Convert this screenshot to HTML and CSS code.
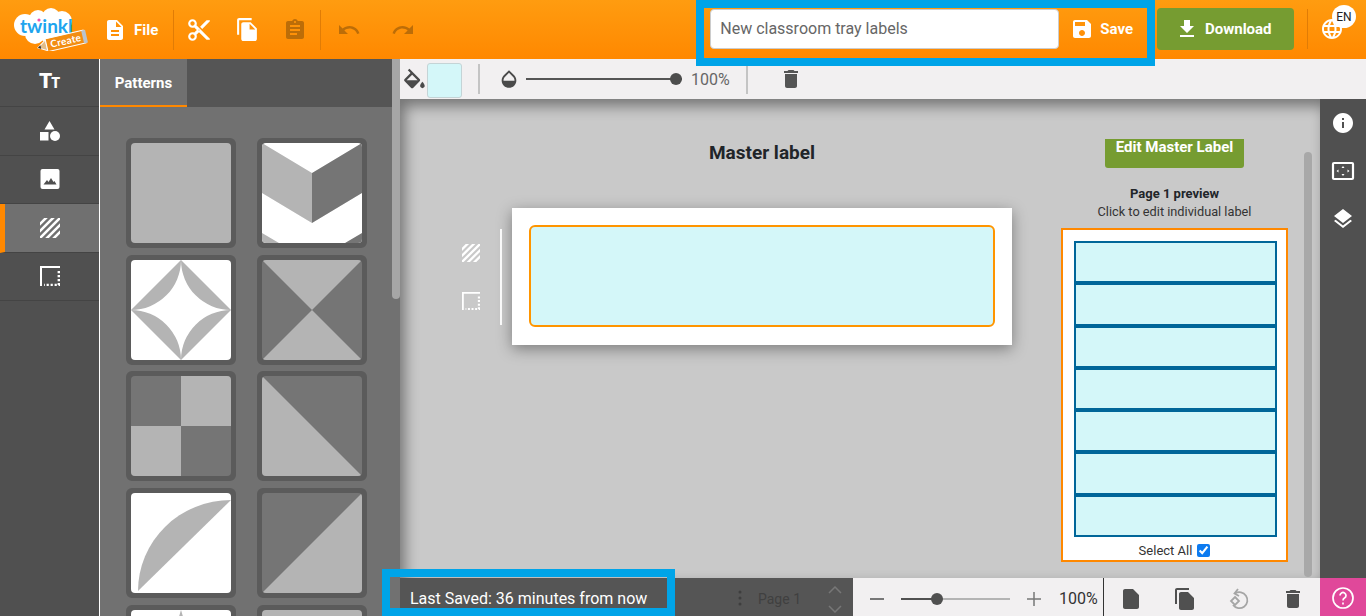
FILE: index.html
```html
<!DOCTYPE html>
<html lang="en">
<head>
<meta charset="utf-8">
<title>Twinkl Create</title>
<link rel="stylesheet" href="styles.css">
</head>
<body>
<svg class="defs" width="0" height="0" aria-hidden="true">
  <defs>
    <symbol id="hatch" viewBox="0 0 20 20">
      <path d="M-1 7L7-1M-1 14L14-1M-1 21L21-1M6 21L21 6M13 21L21 13" stroke="#fff" stroke-width="2.6" fill="none"/>
    </symbol>
    <symbol id="border" viewBox="0 0 20 20">
      <path d="M1 20V1H20" stroke="#fff" stroke-width="2" fill="none"/>
      <path d="M18.800 5V19H4" stroke="#fff" stroke-width="2.400" stroke-dasharray="2.200 1.800" fill="none"/>
    </symbol>
    <symbol id="trash" viewBox="0 0 24 24">
      <path d="M6 19c0 1.1.9 2 2 2h8c1.1 0 2-.9 2-2V7H6v12zM19 4h-3.5l-1-1h-5l-1 1H5v2h14V4z"/>
    </symbol>
  </defs>
</svg>
<div class="app">
  <header class="topbar">
    <div class="logo">
      <svg width="75" height="44" viewBox="0 0 75 44">
        <g fill="#fff">
          <circle cx="12" cy="18" r="11"/><circle cx="25" cy="12" r="9"/><circle cx="38" cy="10" r="9"/><circle cx="49" cy="14" r="10"/><circle cx="50" cy="24" r="8"/><circle cx="22" cy="27" r="10"/><circle cx="38" cy="25" r="12"/>
        </g>
        <text class="logo-word" x="7" y="26">twinkl</text>
        <circle cx="26" cy="13" r="1.6" fill="#ef4fb0"/>
        <g transform="rotate(-13 50 34)">
          <path d="M24 35l9-6v11z" fill="#e2bd8a" stroke="#fff"/>
          <path d="M24 35l3-2v4z" fill="#333"/>
          <rect x="33" y="28" width="39" height="13" fill="#f28d12" stroke="#fff"/>
          <rect x="70" y="28" width="4" height="13" fill="#b9c3cc"/>
          <text class="logo-create" x="37" y="38">Create</text>
        </g>
      </svg>
    </div>
    <div class="file-btn">
      <svg class="ico-w" width="24" height="24" viewBox="0 0 24 24"><path d="M14 2H6c-1.1 0-1.99.9-1.99 2L4 20c0 1.1.89 2 1.99 2H18c1.1 0 2-.9 2-2V8l-6-6zm2 16H8v-2h8v2zm0-4H8v-2h8v2zm-3-5V3.5L18.5 9H13z"/></svg>
      <span>File</span>
    </div>
    <div class="top-sep"></div>
    <div class="tool-48"><svg class="ico-w" width="26" height="26" viewBox="0 0 24 24"><path d="M9.64 7.64c.23-.5.36-1.05.36-1.64 0-2.21-1.79-4-4-4S2 3.79 2 6s1.79 4 4 4c.59 0 1.14-.13 1.64-.36L10 12l-2.36 2.36C7.14 14.13 6.59 14 6 14c-2.21 0-4 1.79-4 4s1.79 4 4 4 4-1.79 4-4c0-.59-.13-1.14-.36-1.64L12 14l7 7h3v-1L9.64 7.64zM6 8c-1.1 0-2-.89-2-2s.9-2 2-2 2 .89 2 2-.9 2-2 2zm0 12c-1.1 0-2-.89-2-2s.9-2 2-2 2 .89 2 2-.9 2-2 2zm6-7.5c-.28 0-.5-.22-.5-.5s.22-.5.5-.5.5.22.5.5-.22.5-.5.5zM19 3l-6 6 2 2 7-7V3z"/></svg></div>
    <div class="tool-48"><svg class="ico-w" width="25" height="25" viewBox="0 0 24 24"><path d="M16 1H4c-1.1 0-2 .9-2 2v14h2V3h12V1zm-1 4l6 6v10c0 1.1-.9 2-2 2H7.99C6.89 23 6 22.1 6 21l.01-14c0-1.1.89-2 1.99-2h7zm-1 7h5.5L14 6.5V12z"/></svg></div>
    <div class="tool-48"><svg class="ico-off" width="24" height="24" viewBox="0 0 24 24"><path d="M19 3h-4.18C14.4 1.84 13.3 1 12 1c-1.3 0-2.4.84-2.82 2H5c-1.1 0-2 .9-2 2v14c0 1.1.9 2 2 2h14c1.1 0 2-.9 2-2V5c0-1.1-.9-2-2-2zm-7 0c.55 0 1 .45 1 1s-.45 1-1 1-1-.45-1-1 .45-1 1-1zm2 14H7v-2h7v2zm3-4H7v-2h10v2zm0-4H7V7h10v2z"/></svg></div>
    <div class="top-sep"></div>
    <div class="tool-54"><svg class="ico-off" width="24" height="24" viewBox="0 0 24 24"><path d="M12.5 8c-2.65 0-5.05.99-6.9 2.6L2 7v9h9l-3.62-3.62c1.39-1.16 3.16-1.88 5.12-1.88 3.54 0 6.55 2.31 7.6 5.5l2.37-.78C21.08 11.03 17.15 8 12.5 8z"/></svg></div>
    <div class="tool-54"><svg class="ico-off" width="24" height="24" viewBox="0 0 24 24"><path d="M18.4 10.6C16.55 8.99 14.15 8 11.5 8c-4.65 0-8.58 3.03-9.96 7.22L3.9 16c1.05-3.19 4.05-5.5 7.6-5.5 1.95 0 3.73.72 5.12 1.88L13 16h9V7l-3.6 3.6z"/></svg></div>

    <div class="top-right">
      <div class="title-input">New classroom tray labels</div>
      <div class="save-btn">
        <svg class="ico-w" width="24" height="24" viewBox="0 0 24 24"><path d="M17 3H5c-1.11 0-2 .9-2 2v14c0 1.1.89 2 2 2h14c1.1 0 2-.9 2-2V7l-4-4zm-5 16c-1.66 0-3-1.34-3-3s1.34-3 3-3 3 1.34 3 3-1.34 3-3 3zm3-10H5V5h10v4z"/></svg>
        <span>Save</span>
      </div>
      <div class="download-btn">
        <svg class="ico-w" width="24" height="24" viewBox="0 0 24 24"><path d="M19 9h-4V3H9v6H5l7 7 7-7zM5 18v2h14v-2H5z"/></svg>
        <span>Download</span>
      </div>
      <div class="top-sep sep-right"></div>
      <div class="lang">
        <svg class="ico-w" width="24" height="24" viewBox="0 0 24 24"><path d="M11.99 2C6.47 2 2 6.48 2 12s4.47 10 9.99 10C17.52 22 22 17.52 22 12S17.52 2 11.99 2zm6.93 6h-2.95c-.32-1.25-.78-2.45-1.38-3.56 1.84.63 3.37 1.91 4.33 3.56zM12 4.04c.83 1.2 1.48 2.53 1.91 3.96h-3.82c.43-1.43 1.08-2.76 1.91-3.96zM4.26 14C4.1 13.36 4 12.69 4 12s.1-1.36.26-2h3.38c-.08.66-.14 1.32-.14 2 0 .68.06 1.34.14 2H4.26zm.82 2h2.95c.32 1.25.78 2.45 1.38 3.56-1.84-.63-3.37-1.9-4.33-3.56zm2.95-8H5.08c.96-1.66 2.49-2.93 4.33-3.56C8.81 5.55 8.35 6.75 8.03 8zM12 19.96c-.83-1.2-1.48-2.53-1.91-3.96h3.82c-.43 1.43-1.08 2.76-1.91 3.96zM14.34 14H9.66c-.09-.66-.16-1.32-.16-2 0-.68.07-1.35.16-2h4.68c.09.65.16 1.32.16 2 0 .68-.07 1.34-.16 2zm.25 5.56c.6-1.11 1.06-2.31 1.38-3.56h2.95c-.96 1.65-2.49 2.93-4.33 3.56zM16.36 14c.08-.66.14-1.32.14-2 0-.68-.06-1.34-.14-2h3.38c.16.64.26 1.31.26 2s-.1 1.36-.26 2h-3.38z"/></svg>
        <span class="lang-badge">EN</span>
      </div>
    </div>
  </header>

  <div class="body-row">
    <nav class="rail">
      <div class="rail-item"><span class="tt"><span class="tt-big">T</span><span class="tt-small">T</span></span></div>
      <div class="rail-item">
        <svg width="20" height="20" viewBox="0 0 20 20" fill="#fff"><path d="M9.5 0l5 8.5h-10z"/><rect y="11" width="8.5" height="8.5"/><circle cx="15" cy="15" r="5"/></svg>
      </div>
      <div class="rail-item">
        <svg width="20" height="20" viewBox="0 0 20 20"><rect x=".5" width="19" height="20" rx="2" fill="#fff"/><path d="M3.500 15.500l3.500-4.500 1.500 2 2.500-4 2.500 4 1-1 2 3.500z" fill="#505050"/></svg>
      </div>
      <div class="rail-item rail-active"><svg width="20" height="20"><use href="#hatch"/></svg></div>
      <div class="rail-item"><svg width="20" height="20"><use href="#border"/></svg></div>
    </nav>

    <aside class="panel">
      <div class="panel-main">
        <div class="tabs"><div class="tab">Patterns</div></div>
        <div class="tiles">
          <div class="tile"><svg viewBox="0 0 100 100"><rect width="100" height="100" fill="#b4b4b4"/></svg></div>
          <div class="tile"><svg viewBox="0 0 100 100"><rect width="100" height="100" fill="#fff"/><path d="M0 0L50 30V80L0 50ZM0 90L17 100H0Z" fill="#b4b4b4"/><path d="M100 0L50 30V80L100 50ZM100 90L83 100H100Z" fill="#757575"/></svg></div>
          <div class="tile"><svg viewBox="0 0 100 100"><rect width="100" height="100" fill="#fff"/><path d="M50 0L100 50L50 100L0 50Z" fill="#b4b4b4"/><path d="M50 0A50 50 0 0 0 100 50A50 50 0 0 0 50 100A50 50 0 0 0 0 50A50 50 0 0 0 50 0Z" fill="#fff"/></svg></div>
          <div class="tile"><svg viewBox="0 0 100 100"><rect width="100" height="100" fill="#757575"/><path d="M0 0H100L50 50ZM0 100H100L50 50Z" fill="#b4b4b4"/></svg></div>
          <div class="tile"><svg viewBox="0 0 100 100"><rect width="100" height="100" fill="#757575"/><path d="M50 0H100V50H50ZM0 50H50V100H0Z" fill="#b4b4b4"/></svg></div>
          <div class="tile"><svg viewBox="0 0 100 100"><rect width="100" height="100" fill="#757575"/><path d="M0 0L100 100H0Z" fill="#b4b4b4"/></svg></div>
          <div class="tile"><svg viewBox="0 0 100 100"><rect width="100" height="100" fill="#fff"/><path d="M7 98A93 91 0 0 1 100 7Z" fill="#b4b4b4"/></svg></div>
          <div class="tile"><svg viewBox="0 0 100 100"><rect width="100" height="100" fill="#757575"/><path d="M100 0V100H0Z" fill="#b4b4b4"/></svg></div>
          <div class="tile"><svg viewBox="0 0 100 100"><rect width="100" height="100" fill="#fff"/><path d="M50 0L56 20H44Z" fill="#b4b4b4"/></svg></div>
          <div class="tile"><svg viewBox="0 0 100 100"><rect width="100" height="100" fill="#b4b4b4"/></svg></div>
        </div>
      </div>
      <div class="panel-scroll"><div class="panel-thumb"></div></div>
    </aside>

    <main class="workspace">
      <div class="toolbar">
        <svg class="bucket" width="24" height="22" viewBox="2 0 21 18" fill="#4a4a4a"><path d="M16.56 8.94L7.62 0 6.21 1.41l2.38 2.38-5.15 5.15c-.59.59-.59 1.54 0 2.12l5.5 5.5c.29.29.68.44 1.06.44s.77-.15 1.06-.44l5.5-5.5c.59-.58.59-1.53 0-2.12zM5.21 10L10 5.21 14.790 10H5.210zM19 11.500s-2 2.170-2 3.500c0 1.100.9 2 2 2s2-.9 2-2c0-1.330-2-3.500-2-3.500z"/></svg>
        <div class="swatch"></div>
        <div class="tb-sep sep-a"></div>
        <svg class="drop" width="22" height="22" viewBox="0 0 24 24" fill="#4a4a4a"><path d="M17.660 8L12 2.350 6.340 8C4.780 9.560 4 11.640 4 13.640s.78 4.110 2.340 5.670 3.610 2.350 5.660 2.350 4.100-.79 5.660-2.350S20 15.640 20 13.640 19.220 9.560 17.660 8zM6 14c.01-2 .62-3.270 1.760-4.400L12 5.270l4.240 4.380C17.380 10.770 17.990 12 18 14H6z"/></svg>
        <div class="opacity-track"><span class="opacity-thumb"></span></div>
        <span class="pct">100%</span>
        <div class="tb-sep sep-b"></div>
        <svg class="tb-trash" width="24" height="24" fill="#555"><use href="#trash"/></svg>
      </div>

      <div class="mid-row">
        <section class="stage">
          <div class="master">
            <h2 class="master-title">Master label</h2>
            <div class="side-tools">
              <div class="side-icons">
                <svg width="18" height="18"><use href="#hatch"/></svg>
                <svg width="18" height="18"><use href="#border"/></svg>
              </div>
              <div class="side-line"></div>
            </div>
            <div class="label-card"><div class="label-shape"></div></div>
          </div>
          <div class="preview">
            <div class="edit-btn">Edit Master Label</div>
            <div class="preview-title">Page 1 preview</div>
            <div class="preview-sub">Click to edit individual label</div>
            <div class="sheet">
              <div class="sheet-rows">
                <div class="sheet-row"></div><div class="sheet-row"></div><div class="sheet-row"></div><div class="sheet-row"></div><div class="sheet-row"></div><div class="sheet-row"></div><div class="sheet-row"></div>
              </div>
              <label class="select-all">Select All <input type="checkbox" checked></label>
            </div>
          </div>
          <div class="stage-scroll"></div>
        </section>
        <aside class="right-rail">
          <svg class="ico-w" width="24" height="24" viewBox="0 0 24 24"><path d="M12 2C6.480 2 2 6.480 2 12s4.480 10 10 10 10-4.480 10-10S17.520 2 12 2zm1 15h-2v-6h2v6zm0-8h-2V7h2v2z"/></svg>
          <svg width="24" height="24" viewBox="0 0 24 24"><rect x="2" y="4" width="20" height="16" rx="1" fill="none" stroke="#fff" stroke-width="2.200"/><path d="M12 7l1.500 2h-3zM12 17l1.500-2h-3zM5.500 12l2-1.500v3zM18.500 12l-2-1.500v3z" fill="#fff"/></svg>
          <svg class="ico-w" width="24" height="24" viewBox="0 0 24 24"><path d="M11.990 18.540l-7.370-5.730L3 14.070l9 7 9-7-1.630-1.270-7.380 5.740zM12 16l7.360-5.730L21 9l-9-7-9 7 1.630 1.270L12 16z"/></svg>
        </aside>
      </div>

      <footer class="bottom">
        <div class="bottom-left">
          <span class="saved">Last Saved: 36 minutes from now</span>
          <svg class="kebab" width="4" height="16" viewBox="0 0 4 16" fill="#3e3e3e"><circle cx="2" cy="2" r="1.500"/><circle cx="2" cy="8" r="1.500"/><circle cx="2" cy="14" r="1.500"/></svg>
          <span class="page-name">Page 1</span>
          <div class="page-arrows">
            <svg width="14" height="8" viewBox="0 0 14 8"><path d="M1 7L7 1L13 7" fill="none" stroke="#777" stroke-width="1.500"/></svg>
            <svg width="14" height="8" viewBox="0 0 14 8"><path d="M1 1L7 7L13 1" fill="none" stroke="#777" stroke-width="1.500"/></svg>
          </div>
        </div>
        <div class="zoom-box">
          <svg width="14" height="14" viewBox="0 0 14 14"><path d="M0 7H14" stroke="#777" stroke-width="2"/></svg>
          <div class="zoom-track"><span class="zoom-thumb"></span></div>
          <svg width="14" height="14" viewBox="0 0 14 14"><path d="M0 7H14M7 0V14" stroke="#777" stroke-width="1.500"/></svg>
          <span class="zoom-pct">100%</span>
        </div>
        <div class="page-tools">
          <svg width="24" height="24" viewBox="0 0 24 24" fill="#505050"><path d="M6 2c-1.100 0-1.990.9-1.990 2L4 20c0 1.100.89 2 1.990 2H18c1.100 0 2-.9 2-2V8l-6-6H6z"/></svg>
          <svg width="24" height="24" viewBox="0 0 24 24" fill="#505050"><path d="M16 1H4c-1.100 0-2 .9-2 2v14h2V3h12V1zm-1 4l6 6v10c0 1.100-.9 2-2 2H7.990C6.890 23 6 22.100 6 21l.01-14c0-1.100.89-2 1.990-2h7z"/></svg>
          <svg width="24" height="24" viewBox="0 0 24 24" fill="none" stroke="#a5a5a5" stroke-width="1.800"><path d="M8 6.500A8 8 0 1 1 6 18"/><path d="M11 2L7.500 6.500L12 9" /><path d="M8 10l4 4-4 4-4-4z"/></svg>
          <svg width="24" height="24" fill="#505050"><use href="#trash"/></svg>
        </div>
        <div class="help">
          <svg width="24" height="24" viewBox="0 0 24 24" fill="none" stroke="#fff" stroke-width="1.700"><circle cx="12" cy="12" r="10"/><path d="M9 9.500a3 3 0 1 1 4.500 2.600c-1 .6-1.500 1.200-1.500 2.400"/><path d="M12 16.500v2"/></svg>
        </div>
      </footer>
    </main>
  </div>

  <div class="mark mark-title"></div>
  <div class="mark mark-saved"></div>
</div>
</body>
</html>
```

FILE: styles.css
```css
* { box-sizing: border-box; }
html, body { margin: 0; padding: 0; }
body { font-family: Roboto, "Liberation Sans", sans-serif; background: #555; overflow: hidden; }
svg { display: block; flex: none; }
.defs { position: absolute; }
.ico-w { fill: #fff; }
.ico-off { fill: #bc6d08; }

.app { position: relative; width: 1366px; height: 616px; display: flex; flex-direction: column; overflow: hidden; }

/* header */
.topbar { height: 59px; flex: none; display: flex; align-items: center; background: linear-gradient(#ff9c10, #ff8800); color: #fff; }
.logo { margin-left: 13px; width: 75px; height: 44px; margin-top: -1px; }
.logo-word { font: 700 19px Lato, sans-serif; fill: #20a4ee; }
.logo-create { font: 700 10px Lato, sans-serif; fill: #fff; letter-spacing: .3px; }
.file-btn { margin-left: 15px; display: flex; align-items: center; gap: 7px; font-size: 15px; font-weight: 700; width: 55px; }
.top-sep { width: 1px; height: 40px; background: #e07c06; margin-left: 15px; flex: none; }
.tool-48 { width: 48px; display: flex; justify-content: center; flex: none; }
.top-sep + .tool-48 { margin-left: 1px; }
.tool-48 + .top-sep { margin-left: 1px; }
.top-sep + .tool-54 { margin-left: 1px; }
.tool-54 { width: 54px; display: flex; justify-content: center; flex: none; }
.top-right { margin-left: auto; margin-top: -1px; display: flex; align-items: center; }
.title-input { width: 349px; height: 40px; background: #fff; border: 1px solid #ccc; border-radius: 4px; padding: 0 0 2px 9px; display: flex; align-items: center; font-size: 16px; color: #666; }
.save-btn { margin-left: 11px; display: flex; align-items: center; gap: 6px; font-size: 15px; font-weight: 700; margin-right: 24px; }
.download-btn { width: 137px; height: 42px; background: #769c31; border-radius: 4px; display: flex; align-items: center; gap: 6px; padding-left: 18px; font-size: 15px; font-weight: 700; }
.sep-right { margin-left: 13px; }
.lang { position: relative; margin-left: 12px; margin-right: 22px; }
.lang-badge { position: absolute; left: 12px; top: -12px; width: 24px; height: 23px; border-radius: 50%; background: #fff; color: #222; font-size: 12px; display: flex; align-items: center; justify-content: center; }

.body-row { flex: 1; min-height: 0; display: flex; }

/* rail */
.rail { width: 100px; flex: none; background: #505050; border-right: 1px solid #fff; }
.rail-item { height: 48.4px; display: flex; align-items: center; justify-content: center; border-bottom: 1px solid #444; }
.rail-active { background: #707070; border-left: 5px solid #ff8800; padding-right: 5px; }
.tt { display: flex; align-items: baseline; color: #fff; font-weight: 900; line-height: 1; margin-top: -3px; }
.tt-big { font-size: 21px; }
.tt-small { font-size: 14px; margin-left: -1px; }

/* panel */
.panel { width: 300px; flex: none; display: flex; background: #717171; }
.panel-main { width: 292px; flex: none; }
.tabs { height: 48px; background: #555; display: flex; }
.tab { width: 87px; height: 48px; background: #707070; border-bottom: 2px solid #ff8800; color: #fff; font-size: 15px; font-weight: 700; display: flex; align-items: center; justify-content: center; padding-top: 2px; }
.tiles { padding: 31px 0 0 26px; display: grid; grid-template-columns: 110px 110px; column-gap: 21px; row-gap: 6.700px; }
.tile { width: 110px; height: 110px; border: 5px solid #5b5b5b; border-radius: 6px; background: #5b5b5b; }
.tile svg { width: 100px; height: 100px; border-radius: 4px; }
.panel-scroll { width: 8px; flex: none; }
.panel-thumb { height: 240px; background: #a6a6a6; border-radius: 0 0 4px 4px; }

/* workspace */
.workspace { flex: 1; min-width: 0; display: flex; flex-direction: column; }
.toolbar { height: 40px; flex: none; background: #f2f0f1; display: flex; align-items: center; }
.bucket { margin-left: 3px; }
.swatch { width: 35px; height: 35px; background: #d4f7f9; border: 1px solid #c4d4d6; border-radius: 3px; margin-top: 2px; }
.tb-sep { width: 2px; height: 30px; background: #c4c4c4; flex: none; }
.sep-a { margin-left: 16px; }
.drop { margin-left: 18px; }
.opacity-track { position: relative; width: 156px; height: 2px; background: #555; margin-left: 6px; }
.opacity-thumb { position: absolute; right: 0; top: -5px; width: 12px; height: 12px; border-radius: 50%; background: #4d4d4d; }
.pct { margin-left: 9px; font-size: 16px; color: #666; width: 38px; }
.sep-b { margin-left: 17px; }
.tb-trash { margin-left: 31px; }

.mid-row { flex: 1; min-height: 0; display: flex; }
.stage { width: 920px; flex: none; display: flex; align-items: flex-start; background: #c9c9c9; box-shadow: inset 5px 7px 14px rgba(0,0,0,.42); }
.master { margin-left: 62px; display: grid; grid-template-columns: 50px 500px; }
.master-title { grid-column: 2; margin: 43px 0 45px; text-align: center; font-size: 19px; line-height: 21px; font-weight: 700; color: #212529; }
.side-tools { grid-column: 1; display: flex; align-self: center; }
.side-icons { width: 18px; height: 96px; display: flex; flex-direction: column; justify-content: center; gap: 30px; }
.side-line { width: 2px; height: 96px; background: #fff; margin-left: 20px; }
.label-card { grid-column: 2; background: #fff; width: 500px; height: 137px; padding: 17px; box-shadow: 0 4px 14px rgba(0,0,0,.38); }
.label-shape { width: 466px; height: 102px; background: #d4f7f9; border: 2px solid #ff9500; border-radius: 6px; }

.preview { margin-left: 49px; width: 227px; padding-top: 40px; display: flex; flex-direction: column; align-items: center; }
.edit-btn { width: 139px; height: 29px; background: #769c31; border-radius: 0 0 3px 3px; color: #fff; font-size: 15px; font-weight: 700; line-height: 16px; text-align: center; }
.preview-title { margin-top: 17px; font-size: 13px; line-height: 18px; font-weight: 700; color: #212529; }
.preview-sub { font-size: 12.750px; line-height: 18px; color: #333; }
.sheet { margin-top: 7px; width: 227px; height: 334px; background: #fff; border: 2px solid #ff8800; padding: 11px 9px 0 11px; }
.sheet-rows { height: 296px; display: flex; flex-direction: column; }
.sheet-row { flex: 1; background: #d4f7f9; border: 2px solid #006699; }
.select-all { display: flex; align-items: center; justify-content: center; gap: 5px; font-size: 13px; color: #333; height: 26px; padding-right: 2px; }
.select-all input { width: 13px; height: 13px; margin: 0; accent-color: #0d7bf0; }
.stage-scroll { margin: 53px 0 0 16px; width: 8px; height: 425px; background: #a8a8a8; border-radius: 4px; }

.right-rail { width: 46px; flex: none; background: #505050; display: flex; flex-direction: column; align-items: center; gap: 24px; padding-top: 12px; }

/* bottom */
.bottom { height: 38px; flex: none; display: flex; }
.bottom-left { width: 453px; flex: none; background: #555; display: flex; align-items: center; padding: 2px 0 0 10px; }
.saved { color: #fff; font-size: 16px; width: 328px; flex: none; }
.page-name { margin-left: 16px; font-size: 14px; color: #404040; width: 70px; padding-top: 1px; }
.page-arrows { height: 27px; display: flex; flex-direction: column; justify-content: space-between; margin-top: 2px; }
.zoom-box { width: 251px; flex: none; background: #f2f0f1; border-right: 1px solid #333; display: flex; align-items: center; padding: 3px 0 0 17px; }
.zoom-track { position: relative; width: 109px; height: 2px; margin-left: 17px; background: linear-gradient(90deg, #505050 33%, #b4b4b4 33%); }
.zoom-thumb { position: absolute; left: 30px; top: -5px; width: 12px; height: 12px; border-radius: 50%; background: #505050; }
.zoom-track + svg { margin-left: 17px; }
.zoom-pct { margin-left: 18px; font-size: 16px; color: #333; }
.page-tools { width: 216px; flex: none; background: #f2f0f1; display: flex; align-items: center; gap: 30px; padding: 3px 0 0 15px; }
.help { flex: 1; background: #e0489a; display: flex; align-items: center; justify-content: center; padding-top: 2px; }

/* blue annotation rectangles over the UI */
.mark { position: absolute; border: 8px solid #00a4e8; pointer-events: none; }
.mark-title { left: 696px; top: 0; width: 459px; height: 66px; }
.mark-saved { left: 382px; top: 569px; width: 293px; height: 47px; }
```
